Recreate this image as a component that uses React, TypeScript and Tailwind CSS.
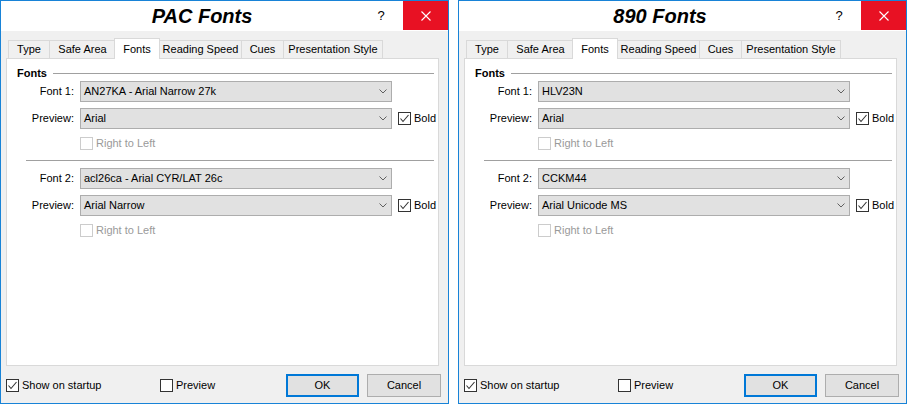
import React from 'react';

interface DialogProps {
  title: string;
  font1: string;
  preview1: string;
  font2: string;
  preview2: string;
}

const tabs = [
  { label: 'Type', cls: 'w-[42px]' },
  { label: 'Safe Area', cls: 'w-[67px] -ml-px' },
  { label: 'Fonts', cls: 'w-[46px] -ml-[2px]', active: true },
  { label: 'Reading Speed', cls: 'w-[83px] -ml-px' },
  { label: 'Cues', cls: 'w-[43px] -ml-px' },
  { label: 'Presentation Style', cls: 'w-[100px] -ml-px' },
];

const CheckMark = () => (
  <svg width="11" height="11" viewBox="0 0 11 11">
    <path d="M1.5 5.5 L4 8.5 L9.5 2" fill="none" stroke="#333" strokeWidth="1.1" />
  </svg>
);

const CheckBox: React.FC<{ checked?: boolean; disabled?: boolean; label: string; gap?: string }> = ({
  checked,
  disabled,
  label,
}) => (
  <div className="flex items-center h-[13px]">
    <span
      className={
        disabled
          ? 'w-[13px] h-[13px] border border-[#cccccc] bg-white flex items-center justify-center'
          : 'w-[13px] h-[13px] border border-[#333333] bg-white flex items-center justify-center'
      }
    >
      {checked && <CheckMark />}
    </span>
    <span className={disabled ? 'ml-[3px] text-[#9a9a9a]' : 'ml-[3px] text-black'}>{label}</span>
  </div>
);

const Chevron = () => (
  <svg width="8" height="5" viewBox="0 0 8 5">
    <path d="M0.5 0.5 L4 4 L7.5 0.5" fill="none" stroke="#606060" strokeWidth="1" />
  </svg>
);

const Combo: React.FC<{ value: string }> = ({ value }) => (
  <div className="w-[312px] h-[21px] bg-[#e1e1e1] border border-[#adadad] flex items-center pl-[3px] pr-[4px]">
    <span className="flex-1 whitespace-nowrap">{value}</span>
    <Chevron />
  </div>
);

const FontRow: React.FC<{ label: string; value: string; bold?: boolean; cls: string }> = ({
  label,
  value,
  bold,
  cls,
}) => (
  <div className={`flex items-center h-[21px] ${cls}`}>
    <span className="w-[67px] text-right">{label}</span>
    <div className="ml-[6px]">
      <Combo value={value} />
    </div>
    {bold && (
      <div className="ml-[6px]">
        <CheckBox checked label="Bold" />
      </div>
    )}
  </div>
);

const Dialog: React.FC<DialogProps> = ({ title, font1, preview1, font2, preview2 }) => (
  <div className="w-[449px] h-[404px] border border-[#1883d7] bg-[#f0f0f0] flex flex-col">
    <header className="h-[30px] bg-white flex">
      <div className="flex-1 pl-[44px] flex items-center justify-center">
        <span className="text-[20px] font-bold italic leading-none">{title}</span>
      </div>
      <div className="w-[44px] flex items-center justify-center text-[13px]">?</div>
      <div className="w-[45px] h-[29px] bg-[#e81123] flex items-center justify-center">
        <svg width="10" height="10" viewBox="0 0 10 10">
          <path d="M0.5 0.5 L9.5 9.5 M9.5 0.5 L0.5 9.5" stroke="#fff" strokeWidth="1.1" />
        </svg>
      </div>
    </header>

    <div className="flex-1 flex flex-col pl-[5px] pr-[9px]">
      <div className="h-[28px] -mb-px pl-[2px] flex items-end relative z-10">
        {tabs.map(t =>
          t.active ? (
            <div
              key={t.label}
              className={`${t.cls} h-[21px] bg-white border border-b-0 border-[#d9d9d9] flex items-center justify-center relative z-10 whitespace-nowrap`}
            >
              {t.label}
            </div>
          ) : (
            <div
              key={t.label}
              className={`${t.cls} h-[19px] bg-[#f0f0f0] border border-[#d9d9d9] flex items-center justify-center whitespace-nowrap`}
            >
              {t.label}
            </div>
          )
        )}
      </div>

      <main className="h-[308px] bg-white border border-[#d9d9d9] flex flex-col">
        <div className="mt-[7px] h-[14px] pl-[10px] pr-[4px] flex items-center">
          <span className="font-bold">Fonts</span>
          <div className="flex-1 h-px bg-[#a0a0a0] ml-[6px]" />
        </div>
        <FontRow label="Font 1:" value={font1} cls="mt-px" />
        <FontRow label="Preview:" value={preview1} bold cls="mt-[6px]" />
        <div className="mt-[8px] pl-[73px]">
          <CheckBox disabled label="Right to Left" />
        </div>
        <div className="mt-[10px] ml-[19px] mr-[4px] h-px bg-[#a0a0a0]" />
        <FontRow label="Font 2:" value={font2} cls="mt-[7px]" />
        <FontRow label="Preview:" value={preview2} bold cls="mt-[6px]" />
        <div className="mt-[8px] pl-[73px]">
          <CheckBox disabled label="Right to Left" />
        </div>
      </main>

      <footer className="mt-[8px] h-[23px] -mr-[2px] flex items-center">
        <div className="w-[154px]">
          <CheckBox checked label="Show on startup" />
        </div>
        <CheckBox label="Preview" />
        <button className="ml-auto w-[73px] h-[23px] bg-[#e1e1e1] border-2 border-[#0078d7] flex items-center justify-center">
          OK
        </button>
        <button className="ml-[8px] w-[74px] h-[23px] bg-[#e1e1e1] border border-[#adadad] flex items-center justify-center">
          Cancel
        </button>
      </footer>
    </div>
  </div>
);

export default function App() {
  return (
    <div className="w-[907px] h-[405px] bg-white flex gap-[9px] text-[11px] text-black font-['Liberation_Sans',Arial,sans-serif]">
      <Dialog
        title="PAC Fonts"
        font1="AN27KA - Arial Narrow 27k"
        preview1="Arial"
        font2="acl26ca - Arial CYR/LAT 26c"
        preview2="Arial Narrow"
      />
      <Dialog
        title="890 Fonts"
        font1="HLV23N"
        preview1="Arial"
        font2="CCKM44"
        preview2="Arial Unicode MS"
      />
    </div>
  );
}
